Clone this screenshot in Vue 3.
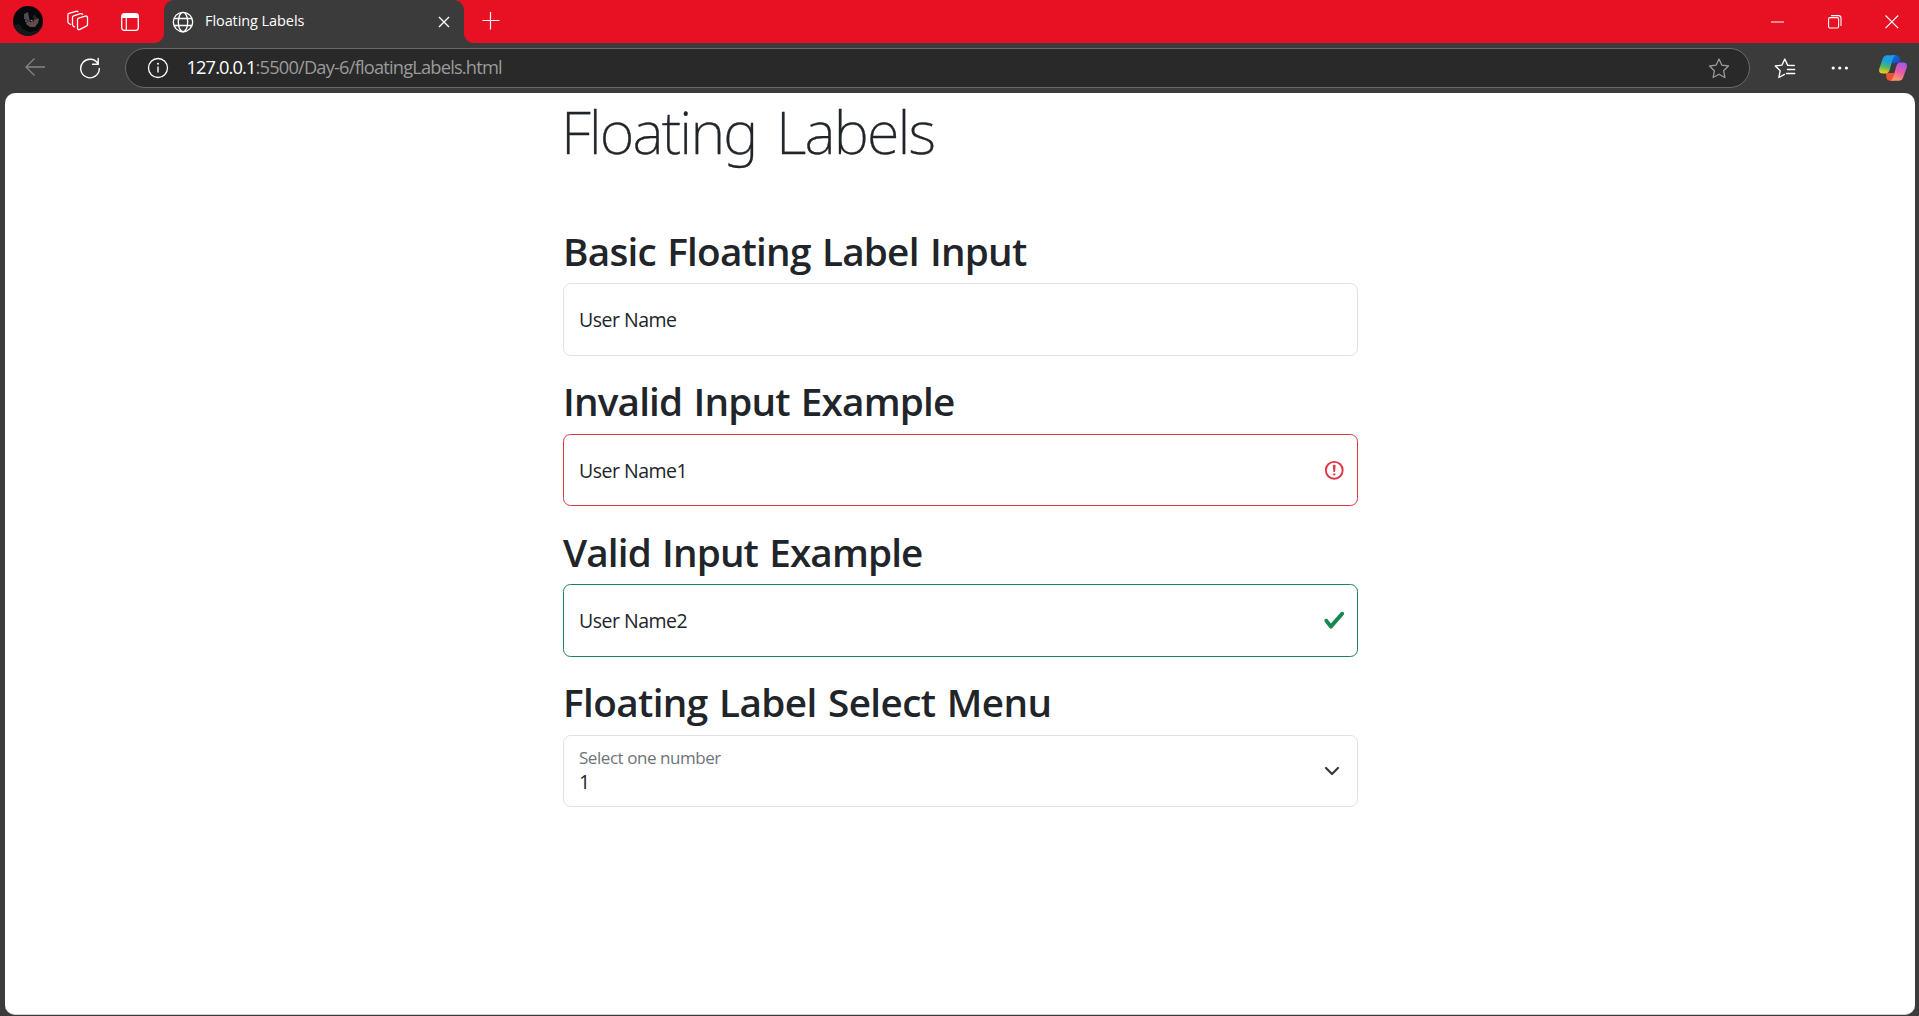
<script setup>
const sections = [
  { title: 'Basic Floating Label Input', label: 'User Name', state: 'plain', key: 'basic' },
  { title: 'Invalid Input Example', label: 'User Name1', state: 'invalid', key: 'invalid' },
  { title: 'Valid Input Example', label: 'User Name2', state: 'valid', key: 'valid' },
  { title: 'Floating Label Select Menu', label: 'Select one number', value: '1', state: 'select', key: 'select' },
]
</script>

<template>
  <div class="window">
    <header class="tabstrip">
      <svg class="avatar" width="30" height="30" viewBox="0 0 30 30">
        <defs><clipPath id="avatar-clip"><circle cx="15" cy="15" r="15" /></clipPath></defs>
        <g clip-path="url(#avatar-clip)">
          <rect width="30" height="30" fill="#07080b" />
          <path d="M0 19l6-1 4 5 6 3 8-1 6-6v11H0z" fill="#14191a" />
          <path d="M11 8l4-2 1 5 1 5-3-2-3-1z" fill="#4f4a52" />
          <path d="M14 15l4 1 5-4 3 1-1 4-3 4-5 0-4-3z" fill="#624b4b" />
          <path d="M17 5l3 6 1 5-3-2-1-5z" fill="#0a0b10" />
          <path d="M21 8l3 4-1 2-3-2z" fill="#2b2326" />
          <path d="M12 15h2M17.500 14.500h2" stroke="#5f9fb4" stroke-width="1.200" />
        </g>
      </svg>
      <svg class="workspaces" width="22" height="22" viewBox="0 0 22 22" fill="none" stroke="#fff" stroke-width="1.300" stroke-linejoin="round" stroke-linecap="round">
        <path d="M10.500 9.700q0-1.200 1.100-1.600l6.700-2q2.200-.5 2.200 1.600v6.800q0 1.200-1.100 1.700l-6.600 3.100q-2.300.9-2.300-1.300z" />
        <path d="M7.500 16.800l-1-.5q-1-.5-1-1.700V7.500q0-1.200 1.100-1.600l7-2.200q1.300-.4 1.900.6" />
        <path d="M3.700 14.500l-1.800-1q-1-.5-1-1.700V5q0-1.200 1.100-1.600L9 1.300q1.400-.4 1.900.4" />
      </svg>
      <svg class="tab-actions" width="18" height="18" viewBox="0 0 18 18">
        <rect x=".7" y=".7" width="16.600" height="16.600" rx="2.500" fill="none" stroke="#fff" stroke-width="1.300" />
        <path d="M.7 5V3Q.7.7 3 .7h12q2.300 0 2.300 2.300v2z" fill="#fff" />
        <path d="M5.300 5v12" stroke="#fff" stroke-width="1.200" />
      </svg>
      <div class="tab">
        <svg class="globe" width="22" height="22" viewBox="0 0 22 22" fill="none" stroke="#fff" stroke-width="1.350">
          <circle cx="11" cy="11" r="9.700" />
          <ellipse cx="11" cy="11" rx="4.700" ry="9.700" />
          <path d="M2.100 7.500h17.800M2.100 14.500h17.800" />
        </svg>
        <span class="tab-title">Floating Labels</span>
        <svg class="tab-close" width="12" height="12" viewBox="0 0 12 12" stroke="#fff" stroke-width="1.400"><path d="M1 1l10 10M11 1L1 11" /></svg>
      </div>
      <svg class="new-tab" width="18" height="18" viewBox="0 0 18 18" stroke="#fff" stroke-width="1.200"><path d="M.5 8.500h17M8.500 0v17.500" /></svg>
      <div class="window-controls">
        <svg width="14" height="14" viewBox="0 0 14 14"><path d="M0 7h13" stroke="#fff" /></svg>
        <svg width="14" height="14" viewBox="0 0 14 14" fill="none" stroke="#fff" stroke-width="1.100"><rect x=".6" y="2.600" width="10" height="10.400" rx="1.400" /><path d="M3 .6h7.500q2.500 0 2.500 2.500V11" /></svg>
        <svg width="14" height="14" viewBox="0 0 14 14" stroke="#fff" stroke-width="1.100"><path d="M.5.5l12.700 12.700M13.200.5L.5 13.200" /></svg>
      </div>
    </header>

    <nav class="toolbar">
      <svg class="back" width="20" height="18" viewBox="0 0 20 18" fill="none" stroke="#858585" stroke-width="1.300"><path d="M20 9H1M9.500.5L1 9l8.500 8.500" /></svg>
      <svg class="reload" width="22" height="22" viewBox="0 0 22 22" fill="none" stroke="#fff" stroke-width="1.400" stroke-linecap="round" stroke-linejoin="round"><path d="M19.300 7.300A9.300 9.300 0 1 0 20.300 11.500M19.200 1.500v5.800h-5.600" /></svg>
      <div class="address">
        <svg class="info" width="22" height="22" viewBox="0 0 22 22"><circle cx="11" cy="11" r="9.500" fill="none" stroke="#fff" stroke-width="1.300" /><path d="M11 9.500v6" stroke="#fff" stroke-width="1.400" /><circle cx="11" cy="6.800" r="1" fill="#fff" /></svg>
        <span class="url"><span class="host">127.0.0.1</span><span class="path">:5500/Day-6/floatingLabels.html</span></span>
        <svg class="star" width="22" height="21" viewBox="0 0 22 21" fill="none" stroke="#9a9a9a" stroke-width="1.300" stroke-linejoin="round"><path d="M11 1l2.900 6.200 6.600.8-4.900 4.700 1.300 6.800L11 16.200l-5.900 3.300 1.300-6.800L1.500 8l6.600-.8z" /></svg>
      </div>
      <svg class="favorites" width="22" height="21" viewBox="0 0 22 21" fill="none" stroke="#fff" stroke-width="1.350" stroke-linejoin="round" stroke-linecap="round"><path d="M14 7.400h-.3L10.800 1 7.900 7.200 1.300 8l4.900 4.700-1.300 6.800 5.600-3.100M14 7.400l6.300.1M13.500 11.500h7.200M12.500 15.500h8.200" /></svg>
      <svg class="more" width="18" height="4" viewBox="0 0 18 4" fill="#fff"><circle cx="2.200" cy="2" r="1.600" /><circle cx="8.800" cy="2" r="1.600" /><circle cx="15.400" cy="2" r="1.600" /></svg>
      <svg class="copilot" width="28" height="26" viewBox="0 0 28 26">
        <defs>
          <linearGradient id="cp-left" x1=".6" y1="0" x2=".4" y2="1"><stop offset="0" stop-color="#1b9cf2" /><stop offset=".35" stop-color="#1b9fd8" /><stop offset=".65" stop-color="#4db669" /><stop offset="1" stop-color="#f2cb12" /></linearGradient>
          <linearGradient id="cp-right" x1=".6" y1="0" x2=".3" y2="1"><stop offset="0" stop-color="#a657ee" /><stop offset=".5" stop-color="#ed5aa0" /><stop offset="1" stop-color="#fda062" /></linearGradient>
          <linearGradient id="cp-top" x1="0" y1="0" x2="1" y2="1"><stop offset="0" stop-color="#176cec" /><stop offset="1" stop-color="#1844bd" /></linearGradient>
        </defs>
        <path d="M13 .3h4.300q2.500 0 3.300 2.700l1.400 4.600h-3q-2.500 0-3.700 1L13.500 8z" fill="url(#cp-top)" />
        <path d="M7 18h8l-1 7.700h-3.300q-2.500 0-3.300-2.700z" fill="#ef502d" />
        <path d="M8.300.3h8.400q-1.900.5-2.600 3L10.500 15.300q-.9 3.100-4 3.100H4q-4.900 0-3.700-5L3.700 3.800Q4.900.3 8.300.3z" fill="url(#cp-left)" />
        <path d="M19.700 25.700h-8.400q1.900-.5 2.600-3l3.600-12q.9-3.100 4-3.100H24q4.900 0 3.700 5l-3.400 9.600q-1.200 3.500-4.600 3.500z" fill="url(#cp-right)" />
      </svg>
    </nav>

    <main class="page">
      <div class="container">
        <h1>Floating Labels</h1>
        <section v-for="s in sections" :key="s.key" :class="s.key">
          <h2>{{ s.title }}</h2>
          <div class="field" :class="s.state">
            <div class="field-text">
              <span class="label">{{ s.label }}</span>
              <span v-if="s.value" class="value">{{ s.value }}</span>
            </div>
            <svg v-if="s.state === 'invalid'" class="mark" width="22.500" height="22.500" viewBox="0 0 12 12" fill="none" stroke="#dc3545"><circle cx="6" cy="6" r="4.500" /><path stroke-linejoin="round" d="M5.800 3.600h.4L6 6.500z" /><circle cx="6" cy="8.200" r=".6" fill="#dc3545" stroke="none" /></svg>
            <svg v-if="s.state === 'valid'" class="mark" width="22.500" height="22.500" viewBox="0 0 8 8"><path fill="#198754" d="M2.300 6.730.6 4.530c-.4-1.040.46-1.400 1.100-.8l1.100 1.400 3.400-3.800c.6-.63 1.600-.27 1.200.7l-4 4.600c-.43.5-.8.4-1.100.1z" /></svg>
            <svg v-if="s.state === 'select'" class="chevron" width="20" height="15" viewBox="0 0 20 15" fill="none" stroke="#343a40" stroke-width="2.200" stroke-linecap="round" stroke-linejoin="round"><path d="m4 4 6 6 6-6" /></svg>
          </div>
        </section>
      </div>
    </main>
  </div>
</template>

<style>
body { margin: 0; background: #3b3b3b; overflow: hidden; }
</style>

<style scoped>
* { box-sizing: border-box; }
svg { display: block; flex: none; }
.window {
  width: 1919px;
  height: 1016px;
  background: #3b3b3b;
  font-family: "Open Sans", "Noto Sans", sans-serif;
}
.tabstrip {
  display: flex;
  align-items: flex-start;
  height: 43px;
  background: #e81123;
}
.avatar { margin: 6px 0 0 13px; }
.workspaces { margin: 10px 0 0 24px; }
.tab-actions { margin: 12.500px 0 0 32px; }
.tab {
  position: relative;
  display: flex;
  width: 300px;
  height: 43px;
  margin-left: 25px;
  background: #3b3b3b;
  border-radius: 10px 10px 0 0;
}
.tab::before, .tab::after {
  content: "";
  position: absolute;
  bottom: 0;
  width: 10px;
  height: 10px;
}
.tab::before { left: -10px; background: radial-gradient(circle at 0 0, #e81123 9.500px, #3b3b3b 10.500px); }
.tab::after { right: -10px; background: radial-gradient(circle at 100% 0, #e81123 9.500px, #3b3b3b 10.500px); }
.globe { margin: 11px 0 0 8px; }
.tab-title {
  margin: 10px 0 0 11px;
  font-size: 14.500px;
  line-height: 22px;
  color: #fff;
  white-space: nowrap;
  letter-spacing: -0.08px;
}
.tab-close { margin: 16px 14px 0 auto; }
.new-tab { margin: 12px 0 0 18px; }
.window-controls { display: flex; gap: 43px; margin: 14.500px 20.500px 0 auto; }

.toolbar { display: flex; align-items: flex-start; height: 50px; }
.back { margin: 15px 0 0 25px; }
.reload { margin: 14px 0 0 34px; }
.address {
  display: flex;
  width: 1625px;
  height: 40px;
  margin: 5px 0 0 24px;
  border: 1px solid #6a6a6a;
  border-radius: 20px;
  background: #292929;
}
.info { margin: 8px 0 0 20.500px; }
.url {
  display: flex;
  margin: 5px 0 0 18px;
  font-size: 18.300px;
  line-height: 26px;
  white-space: nowrap;
}
.host { color: #fff; letter-spacing: -0.9px; }
.path { color: #9b9b9b; letter-spacing: -0.82px; }
.star { margin: 9px 19px 0 auto; }
.favorites { margin: 15px 0 0 24px; }
.more { margin: 22.500px 0 0 35px; }
.copilot { margin: 12px 0 0 30px; }

.page {
  height: 922px;
  margin: 0 4px 0 5px;
  background: #fff;
  border-radius: 10px;
  border-bottom: 1px solid #d0d0d0;
  color: #212529;
}
.container { width: 795px; margin-left: 558px; padding-top: 2px; }
h1 {
  height: 72px;
  margin: 0 0 58.250px -2px;
  font-family: "Noto Sans", "Open Sans", sans-serif;
  font-size: 59.500px;
  font-weight: 200;
  line-height: 72px;
  letter-spacing: -1.850px;
  word-spacing: 6px;
  white-space: nowrap;
  -webkit-text-stroke: 0.35px #212529;
}
section { height: 150.500px; }
h2 {
  height: 48px;
  margin: 0 0 10px;
  padding-top: 1.500px;
  font-size: 38.700px;
  font-weight: 600;
  line-height: 48px;
  word-spacing: 2px;
  white-space: nowrap;
}
.basic h2 { letter-spacing: -0.77px; }
.invalid h2 { letter-spacing: -0.84px; }
.valid h2 { letter-spacing: -0.87px; }
.select h2 { letter-spacing: -0.62px; }
.field {
  display: flex;
  align-items: center;
  height: 72.500px;
  padding: 0 11.500px 0 15px;
  border: 1px solid #dee2e6;
  border-radius: 7.500px;
}
.field-text { display: flex; flex-direction: column; }
.field.invalid { border-color: #dc3545; }
.field.valid { border-color: #198754; }
.label, .value { font-size: 19.500px; line-height: 30px; white-space: nowrap; letter-spacing: -0.5px; }
.field.invalid .label { padding-top: 1px; }
.select .label { font-size: 17px; line-height: 24px; color: #6f7377; letter-spacing: -0.45px; }
.select .value { line-height: 23px; padding-bottom: 4px; }
.mark { margin-left: auto; }
.chevron { margin: 0 4px 0 auto; }
</style>
